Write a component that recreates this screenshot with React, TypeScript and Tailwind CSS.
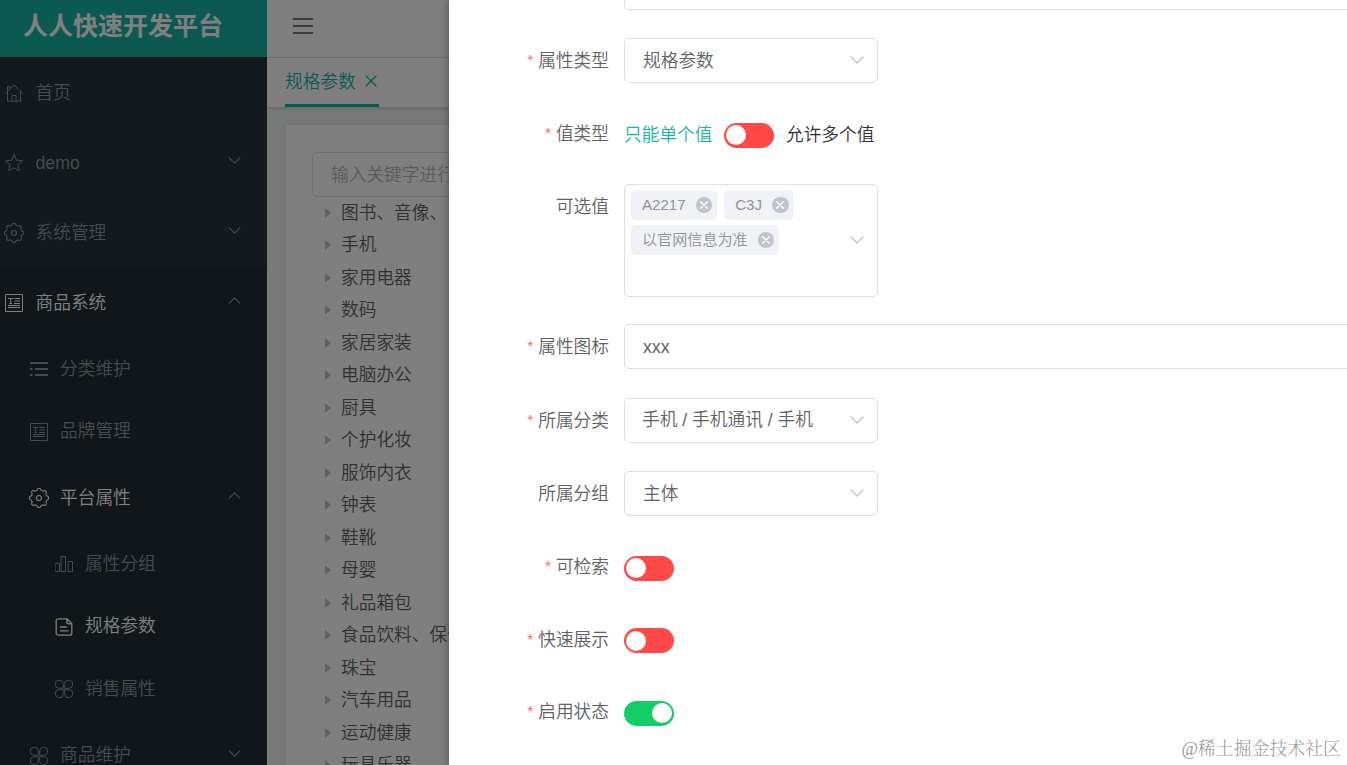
import React from "react";

type IconProps = { className?: string };

const stroke = {
  fill: "none",
  stroke: "currentColor",
  strokeWidth: 1,
  strokeLinecap: "round" as const,
  strokeLinejoin: "round" as const,
};

const HomeIcon = ({ className }: IconProps) => (
  <svg viewBox="0 0 18 18" className={className} {...stroke}>
    <path d="M.6 9.2 9 1l8.4 8.2M2.5 7.6v9.600h13V7.600M2.5 7.200V2.500h2.500v2.200M7 17v-5.500h4V17" />
  </svg>
);

const StarIcon = ({ className }: IconProps) => (
  <svg viewBox="0 0 18 18" className={className} {...stroke}>
    <path d="m9 .8 2.400 5.400 6 .6-4.500 4 1.300 6L9 13.800l-5.200 3 1.300-6-4.500-4 6-.6z" />
  </svg>
);

const GearIcon = ({ className }: IconProps) => (
  <svg viewBox="0 0 20 20" className={className} {...stroke} strokeWidth={1.1}>
    <path d="M8.55 1.1A1.7 1.7 0 0 1 11.45 1.1A2.6 2.6 0 0 0 15.3 2.7A1.7 1.7 0 0 1 17.3 4.7A2.6 2.6 0 0 0 18.9 8.55A1.7 1.7 0 0 1 18.9 11.45A2.6 2.6 0 0 0 17.3 15.3A1.7 1.7 0 0 1 15.3 17.3A2.6 2.6 0 0 0 11.45 18.9A1.7 1.7 0 0 1 8.55 18.9A2.6 2.6 0 0 0 4.7 17.3A1.7 1.7 0 0 1 2.7 15.3A2.6 2.6 0 0 0 1.1 11.45A1.7 1.7 0 0 1 1.1 8.55A2.6 2.6 0 0 0 2.7 4.7A1.7 1.7 0 0 1 4.7 2.7A2.6 2.6 0 0 0 8.55 1.1Z" />
    <circle cx="10" cy="10" r="2.5" />
  </svg>
);

const ArticleIcon = ({ className }: IconProps) => (
  <svg viewBox="0 0 18 18" className={className} {...stroke} strokeLinecap="butt" strokeLinejoin="miter">
    <path d="M.5.5h17v17H.5zM3 4.500h5.500M5.700 4.500v5M4.500 9.500H7M9.500 4.500H15M9.500 7H15M9 9.500h6M3 11.500h12M3 13.500h12" />
  </svg>
);

const ListIcon = ({ className }: IconProps) => (
  <svg viewBox="0 0 18 18" className={className} {...stroke} strokeWidth={2} strokeLinecap="butt">
    <path d="M0 3h18M0 9h2.5M5 9h13M0 15h2.5M5 15h13" />
  </svg>
);

const BarsIcon = ({ className }: IconProps) => (
  <svg viewBox="0 0 18 18" className={className} {...stroke}>
    <path d="M.5 8.5h4v8h-4zM6.500 1.500h4v15h-4zM13.500 6.500h4v10h-4z" />
  </svg>
);

const DocIcon = ({ className }: IconProps) => (
  <svg viewBox="0 0 18 18" className={className} {...stroke} strokeWidth={1.3}>
    <path d="M11.8.8H3.2a2 2 0 0 0-2 2v12.4a2 2 0 0 0 2 2h11.600a2 2 0 0 0 2-2V5.800zM11.800.8v3a2 2 0 0 0 2 2h3M5.500 9h6M5.500 12.800h7.500" />
  </svg>
);

const CloverIcon = ({ className }: IconProps) => (
  <svg viewBox="0 0 18 18" className={className} {...stroke}>
    <path d="M8.200 8.200h-4.700a3 3 0 0 1-3-3v-1.700a3 3 0 0 1 3-3h1.700a3 3 0 0 1 3 3zM9.800 8.200V3.500a3 3 0 0 1 3-3h1.700a3 3 0 0 1 3 3v1.700a3 3 0 0 1-3 3zM8.200 9.800v4.700a3 3 0 0 1-3 3H3.500a3 3 0 0 1-3-3v-1.700a3 3 0 0 1 3-3zM9.800 9.800h4.700a3 3 0 0 1 3 3v1.700a3 3 0 0 1-3 3h-1.700a3 3 0 0 1-3-3z" />
  </svg>
);

const ChevronIcon = ({ className }: IconProps) => (
  <svg viewBox="0 0 14 8" className={className} {...stroke} strokeWidth={1.3}>
    <path d="m1 1 6 6 6-6" />
  </svg>
);

const CrossIcon = ({ className }: IconProps) => (
  <svg viewBox="0 0 12 12" className={className} {...stroke} strokeWidth={1.2}>
    <path d="m1 1 10 10M11 1 1 11" />
  </svg>
);

type MenuItem = {
  label: string;
  icon: React.FC<IconProps>;
  level: 0 | 1 | 2;
  active?: boolean;
  arrow?: "up" | "down";
};

const menuItems: MenuItem[] = [
  { label: "首页", icon: HomeIcon, level: 0 },
  { label: "demo", icon: StarIcon, level: 0, arrow: "down" },
  { label: "系统管理", icon: GearIcon, level: 0, arrow: "down" },
  { label: "商品系统", icon: ArticleIcon, level: 0, active: true, arrow: "up" },
  { label: "分类维护", icon: ListIcon, level: 1 },
  { label: "品牌管理", icon: ArticleIcon, level: 1 },
  { label: "平台属性", icon: GearIcon, level: 1, active: true, arrow: "up" },
  { label: "属性分组", icon: BarsIcon, level: 2 },
  { label: "规格参数", icon: DocIcon, level: 2, active: true },
  { label: "销售属性", icon: CloverIcon, level: 2 },
  { label: "商品维护", icon: CloverIcon, level: 1, arrow: "down" },
];

const indent = ["pl-1", "pl-[29px]", "pl-[54px]"];

const categories = [
  "图书、音像、电子书刊",
  "手机",
  "家用电器",
  "数码",
  "家居家装",
  "电脑办公",
  "厨具",
  "个护化妆",
  "服饰内衣",
  "钟表",
  "鞋靴",
  "母婴",
  "礼品箱包",
  "食品饮料、保健食品",
  "珠宝",
  "汽车用品",
  "运动健康",
  "玩具乐器",
];

const Sidebar = () => (
  <aside className="h-full w-[267px] shrink-0 overflow-hidden bg-[#263238]">
    <h1 className="flex h-[57px] items-center bg-[#17b3a3] pb-1 pl-[23px] text-[25px] font-bold text-white">
      人人快速开发平台
    </h1>
    <nav>
      {menuItems.map(({ label, icon: Icon, level, active, arrow }, i) => (
        <div
          key={label}
          className={`flex items-center pr-[26px] ${indent[level]} ${level === 0 || arrow ? "h-[70px]" : "h-[62.5px]"} ${i > 2 ? "bg-[#212d32]" : ""} ${active ? "text-white" : "text-[#8a979e]"}`}
        >
          <span className={`mt-0.5 flex size-5 shrink-0 items-center justify-center ${level === 0 ? "mr-[11.5px]" : "mr-[11px]"}`}>
            <Icon className={Icon === GearIcon ? "size-5" : "size-[18px]"} />
          </span>
          <span className="pt-0.5">{label}</span>
          {arrow && (
            <ChevronIcon
              className={`mb-[3px] ml-auto h-[7px] w-[13px] text-[#8a979e] ${arrow === "up" ? "rotate-180" : ""}`}
            />
          )}
        </div>
      ))}
    </nav>
  </aside>
);

const Content = () => (
  <div className="flex min-w-0 flex-1 flex-col bg-[#f1f4f5]">
    <header className="flex h-[58px] shrink-0 items-center border-b border-[#e4e7ed] bg-white pb-[5px] pl-[26px]">
      <div className="flex w-5 flex-col gap-[5px] text-[#76787b]">
        <i className="h-0.5 bg-current" />
        <i className="h-0.5 bg-current" />
        <i className="h-0.5 bg-current" />
      </div>
    </header>
    <div className="h-[49px] shrink-0 bg-white pl-[18px] shadow-[0_1px_4px_rgba(0,0,0,0.2)]">
      <div className="flex h-full w-[94px] items-center border-b-[3px] border-[#17b3a3] text-[#17b3a3]">
        <span className="pt-0.5">规格参数</span>
        <CrossIcon className="ml-[9px] size-3" />
      </div>
    </div>
    <main className="mt-[18px] ml-[19px] flex-1 overflow-hidden bg-white pt-[27px] pl-[26px] shadow-[0_0_10px_rgba(0,0,0,0.08)]">
      <div className="flex h-[45px] items-center rounded-[5px] border border-[#dcdfe6] pt-px pl-[18px] text-[#b4b8be]">
        输入关键字进行过滤
      </div>
      <ul>
        {categories.map((name) => (
          <li key={name} className="flex h-[32.5px] items-center text-[#606266]">
            <i className="mr-2.5 mb-px ml-[13px] border-y-[5px] border-l-[6px] border-y-transparent border-l-[#c0c4cc]" />
            {name}
          </li>
        ))}
      </ul>
    </main>
  </div>
);

type FieldProps = {
  label: string;
  required?: boolean;
  className?: string;
  children: React.ReactNode;
};

const Field = ({ label, required, className = "mb-[28.5px]", children }: FieldProps) => (
  <div className={`flex ${className}`}>
    <label className="flex h-[45px] w-[160px] shrink-0 items-center justify-end pt-px text-[#606266]">
      {required && <span className="mr-[5px] pb-[3px] text-[15.5px] text-[#f56c6c]">*</span>}
      {label}
    </label>
    <div className="ml-[15px] flex min-h-[45px] flex-1 items-center">{children}</div>
  </div>
);

const Select = ({ value }: { value: string }) => (
  <div className="flex h-[45px] w-[254px] items-center justify-between rounded-[5px] border border-[#dcdfe6] pr-[13px] pl-[18px] text-[#606266]">
    <span className={value.includes("/") ? "-ml-px" : "pt-0.5"}>{value}</span>
    <ChevronIcon className="mb-px h-2 w-3.5 text-[#c0c4cc]" />
  </div>
);

const Tag = ({ text }: { text: string }) => (
  <span className="flex h-[30px] items-center rounded-[5px] bg-[#f0f2f5] pr-[5px] pl-[11px] text-[15.1px] text-[#909399]">
    <span>{text}</span>
    <span className="ml-2.5 flex size-[16.5px] items-center justify-center rounded-full bg-[#c0c4cc] text-white">
      <CrossIcon className="size-2 stroke-2" />
    </span>
  </span>
);

const Switch = ({ on }: { on?: boolean }) => (
  <span
    className={`mt-0.5 flex h-[25px] w-[50px] items-center rounded-full px-0.5 ${on ? "justify-end bg-[#13ce66]" : "bg-[#ff4949]"}`}
  >
    <i className="size-5 rounded-full bg-white" />
  </span>
);

const Drawer = () => (
  <section className="absolute inset-y-0 right-0 left-[449px] overflow-hidden bg-white shadow-[0_0_8px_rgba(0,0,0,0.4)]">
    <div className="mb-7 ml-[175px] h-2.5 rounded-bl-[5px] border-b border-l border-[#dcdfe6]" />
    <Field label="属性类型" required>
      <Select value="规格参数" />
    </Field>
    <Field label="值类型" required className="mb-[27.5px]">
      <span className="pt-0.5 text-[#17b3a3]">只能单个值</span>
      <span className="mr-3 ml-[11.5px]">
        <Switch />
      </span>
      <span className="pt-0.5 text-[#303133]">允许多个值</span>
    </Field>
    <Field label="可选值" className="mb-[27px]">
      <div className="flex h-[113px] w-[254px] justify-between rounded-[5px] border border-[#dcdfe6] pr-[13px]">
        <div className="flex w-[200px] flex-wrap content-start gap-x-[7px] gap-y-[5px] pt-[5px] pl-1.5">
          <Tag text="A2217" />
          <Tag text="C3J" />
          <Tag text="以官网信息为准" />
        </div>
        <ChevronIcon className="mb-px h-2 w-3.5 self-center text-[#c0c4cc]" />
      </div>
    </Field>
    <Field label="属性图标" required className="mb-[29px]">
      <div className="flex h-[45px] flex-1 items-center rounded-l-[5px] border border-r-0 border-[#dcdfe6] pt-0.5 pl-[18px] text-[#606266]">
        xxx
      </div>
    </Field>
    <Field label="所属分类" required className="mb-7">
      <Select value="手机 / 手机通讯 / 手机" />
    </Field>
    <Field label="所属分组">
      <Select value="主体" />
    </Field>
    <Field label="可检索" required className="mb-[27.5px]">
      <Switch />
    </Field>
    <Field label="快速展示" required className="mb-[27.5px]">
      <Switch />
    </Field>
    <Field label="启用状态" required>
      <Switch on />
    </Field>
    <p className="absolute right-[6px] bottom-0.5 font-['Liberation_Serif','Noto_Serif_CJK_SC','Noto_Sans_CJK_SC',serif] text-[17.9px] font-light text-[#999]">
      @稀土掘金技术社区
    </p>
  </section>
);

export default function App() {
  return (
    <div className="relative flex h-screen w-full overflow-hidden font-['Liberation_Sans','Noto_Sans_CJK_SC',sans-serif] text-[17.7px] font-[350] whitespace-nowrap">
      <Sidebar />
      <Content />
      <div className="absolute inset-0 bg-black/50" />
      <Drawer />
    </div>
  );
}
